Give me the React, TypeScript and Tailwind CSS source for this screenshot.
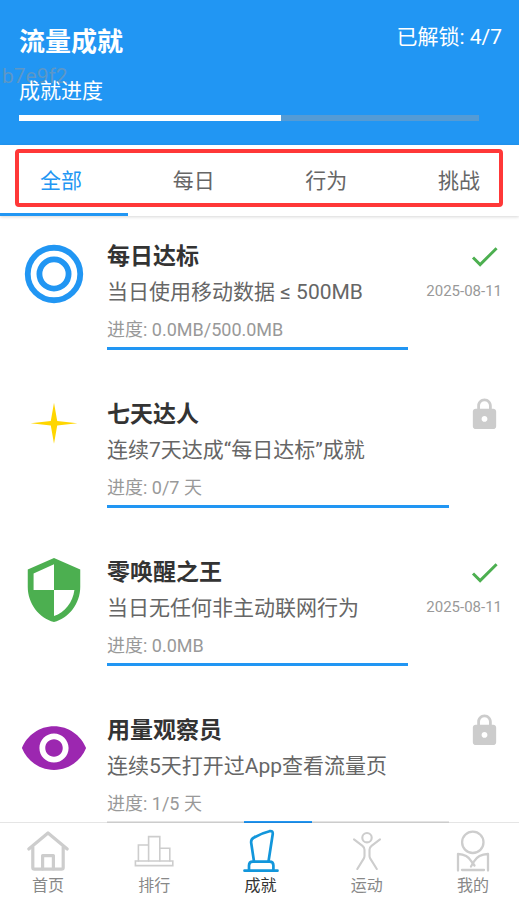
import { useState, type ReactNode } from "react";

interface Achievement {
  title: string;
  description: string;
  progress: string;
  icon: ReactNode;
  unlockedAt?: string;
  // Left edge and width of the filled part, in percent
  bar: { start: number; size: number };
}

const TABS = ["全部", "每日", "行为", "挑战"];

const ACHIEVEMENTS: Achievement[] = [
  {
    title: "每日达标",
    description: "当日使用移动数据 ≤ 500MB",
    progress: "进度: 0.0MB/500.0MB",
    unlockedAt: "2025-08-11",
    bar: { start: 0, size: 100 },
    icon: (
      <g fill="none" stroke="#2196f3" strokeWidth="2">
        <circle cx="12" cy="12" r="9" />
        <circle cx="12" cy="12" r="5" />
      </g>
    ),
  },
  {
    title: "七天达人",
    description: "连续7天达成“每日达标”成就",
    progress: "进度: 0/7 天",
    bar: { start: 0, size: 100 },
    icon: <path fill="#ffd600" d="M12 2l1.1 6.2L20 9l-6.9.8L12 16l-1.1-6.2L4 9l6.9-.8z" />,
  },
  {
    title: "零唤醒之王",
    description: "当日无任何非主动联网行为",
    progress: "进度: 0.0MB",
    unlockedAt: "2025-08-11",
    bar: { start: 0, size: 100 },
    icon: (
      <path
        fill="#4caf50"
        d="M12 1L3 5v6c0 5.55 3.84 10.74 9 12 5.16-1.26 9-6.45 9-12V5l-9-4zm0 10.99h7c-.53 4.12-3.28 7.79-7 8.94V12H5V6.3l7-3.11v8.8z"
      />
    ),
  },
  {
    title: "用量观察员",
    description: "连续5天打开过App查看流量页",
    progress: "进度: 1/5 天",
    bar: { start: 40, size: 20 },
    icon: (
      <path
        fill="#9c27b0"
        d="M12 4.5C7 4.5 2.73 7.61 1 12c1.73 4.39 6 7.5 11 7.5s9.27-3.11 11-7.5c-1.73-4.39-6-7.5-11-7.5zM12 17c-2.76 0-5-2.24-5-5s2.24-5 5-5 5 2.24 5 5-2.24 5-5 5zm0-8c-1.66 0-3 1.34-3 3s1.34 3 3 3 3-1.34 3-3-1.34-3-3-3z"
      />
    ),
  },
];

const NAV_ITEMS: { label: string; icon: ReactNode }[] = [
  {
    label: "首页",
    icon: (
      <g strokeWidth="3.2">
        <path d="M2.8 20L22 4l19.2 16" />
        <path d="M6.8 18v20.5q0 1.7 1.7 1.7h27q1.7 0 1.7-1.7V18" />
        <path d="M16.6 40V26.6h10.8V40" />
      </g>
    ),
  },
  {
    label: "排行",
    icon: (
      <g strokeWidth="1.6" strokeLinejoin="miter">
        <path d="M3.4 32h37.4v4.6H3.4z" />
        <path d="M6.4 32V16h10.2M16.6 32V7.6h11.2V32M27.8 19.2h10V32" />
      </g>
    ),
  },
  {
    label: "成就",
    icon: (
      <g strokeWidth="2.7">
        <path d="M15 32.5L12.2 14q-.5-3.6 2.4-5.2Q22 4.2 30.5 2.2q3.7-.7 3.2 3L29.5 32.5" />
        <path d="M10 41v-4.5q0-3.8 3.8-3.8h16.8q3.8 0 3.8 3.8V41" />
        <path d="M5.5 41.7h33" />
      </g>
    ),
  },
  {
    label: "运动",
    icon: (
      <g strokeWidth="2.1">
        <circle cx="22" cy="8.7" r="4.7" />
        <path d="M9 10.4l8.5 6.4q2 1.5 2 4v6.2q0 1.3-.8 2.6L12.3 40" />
        <path d="M35 10.4l-8.5 6.4q-2 1.5-2 4v6.2q0 1.3.8 2.6L31.8 40" />
      </g>
    ),
  },
  {
    label: "我的",
    icon: (
      <g strokeWidth="2.3">
        <circle cx="21.8" cy="13.3" r="10.7" />
        <path d="M7 41.5V25q9.5.3 13.5 7.5l3 4" />
        <path d="M37 41.5V25q-10 .3-14 7.5l-3 5" />
        <path d="M11 41h22" />
      </g>
    ),
  },
];

function AchievementRow({ item }: { item: Achievement }) {
  return (
    <li className="flex items-start gap-[18px] pt-[23px] pb-6 pl-[19px] pr-[17px]">
      <svg viewBox="0 0 24 24" className="h-[70px] w-[70px] shrink-0" aria-hidden="true">
        {item.icon}
      </svg>
      <div className="min-w-0 flex-1">
        <h2 className="text-[23px] leading-9 font-bold whitespace-nowrap text-[#333333]">{item.title}</h2>
        <p className="mt-[3px] text-[21px] leading-7 whitespace-nowrap text-[#666666]">{item.description}</p>
        <p className="mt-3 text-[18px] leading-6 whitespace-nowrap text-[#999999]">{item.progress}</p>
        <div className="mt-[5px] h-[3px] bg-[#e4e4e4]">
          <div
            className="h-full bg-[#2196f3]"
            style={{ marginLeft: `${item.bar.start}%`, width: `${item.bar.size}%` }}
          />
        </div>
      </div>
      <div className="flex shrink-0 flex-col items-end">
        {item.unlockedAt ? (
          <>
            <svg viewBox="0 0 24 24" className="h-[35px] w-[35px] fill-[#4caf50]" aria-label="已解锁">
              <path d="M9 16.17L4.83 12l-1.42 1.41L9 19 21 7l-1.41-1.41z" />
            </svg>
            <time className="mt-[7px] text-[15px] leading-5 text-[#999999]">{item.unlockedAt}</time>
          </>
        ) : (
          <svg viewBox="0 0 24 24" className="h-[35px] w-[35px] fill-[#cccccc]" aria-label="未解锁">
            <path d="M18 8h-1V6c0-2.76-2.24-5-5-5S7 3.24 7 6v2H6c-1.1 0-2 .9-2 2v10c0 1.1.9 2 2 2h12c1.1 0 2-.9 2-2V10c0-1.1-.9-2-2-2zm-6 9c-1.1 0-2-.9-2-2s.9-2 2-2 2 .9 2 2-.9 2-2 2zm3.1-9H8.9V6c0-1.71 1.39-3.1 3.1-3.1s3.1 1.39 3.1 3.1v2z" />
          </svg>
        )}
      </div>
    </li>
  );
}

export default function App() {
  const [activeTab, setActiveTab] = useState("全部");
  const [activeNav, setActiveNav] = useState("成就");

  return (
    <div className="flex h-screen flex-col overflow-hidden bg-white font-[Roboto,'Noto_Sans_CJK_SC',sans-serif]">
      {/* Header */}
      <header className="relative shrink-0 bg-[#2196f3] pt-[22px] pr-[17px] pb-6 pl-[19px] text-white">
        <span className="absolute top-[62px] left-[2px] text-[21px] leading-7 text-[#999999]/50">b7e9f2</span>
        <div className="flex items-start justify-between">
          <h1 className="text-[26px] leading-10 font-bold">流量成就</h1>
          <p className="text-[21px] leading-[30px]">已解锁: 4/7</p>
        </div>
        <p className="relative mt-[15px] text-[21px] leading-7">成就进度</p>
        <div className="mt-[10px] mr-[23px] h-[6px] bg-[#549bd5]">
          <div className="h-full w-[57%] bg-white" />
        </div>
      </header>

      {/* Category tabs */}
      <div className="relative shrink-0 bg-white pt-1 shadow-[0_1px_3px_rgba(0,0,0,0.16)]">
        <div className="mr-4 ml-[15px] flex h-[58px] items-center justify-between rounded-[4px] border-4 border-[#ff3838] pt-[5px] pr-[19px] pl-[21px]">
          {TABS.map((tab) => (
            <button
              key={tab}
              onClick={() => setActiveTab(tab)}
              className={`text-[21px] leading-7 ${activeTab === tab ? "text-[#2196f3]" : "text-[#666666]"}`}
            >
              {tab}
            </button>
          ))}
        </div>
        <div className="mt-[6px] h-[3px] w-32 bg-[#2196f3]" />
      </div>

      {/* Achievement list */}
      <ul className="min-h-0 flex-1 overflow-y-auto [scrollbar-width:none]">
        {ACHIEVEMENTS.map((item) => (
          <AchievementRow key={item.title} item={item} />
        ))}
      </ul>

      {/* Bottom navigation */}
      <nav className="relative flex h-[78px] shrink-0 justify-between bg-white pt-[6px] pr-6 pl-[26px] shadow-[0_-1px_0_rgba(0,0,0,0.1)]">
        {NAV_ITEMS.map(({ label, icon }) => (
          <button key={label} onClick={() => setActiveNav(label)} className="flex w-11 flex-col items-center gap-px">
            <svg
              viewBox="0 0 44 44"
              fill="none"
              strokeLinecap="round"
              strokeLinejoin="round"
              className={`h-11 w-11 ${activeNav === label ? "stroke-[#1296db]" : "stroke-[#cdcdcd]"}`}
              aria-hidden="true"
            >
              {icon}
            </svg>
            <span
              className={`text-[16px] leading-6 whitespace-nowrap ${
                activeNav === label ? "text-[#333333]" : "text-[#888888]"
              }`}
            >
              {label}
            </span>
          </button>
        ))}
      </nav>
    </div>
  );
}
